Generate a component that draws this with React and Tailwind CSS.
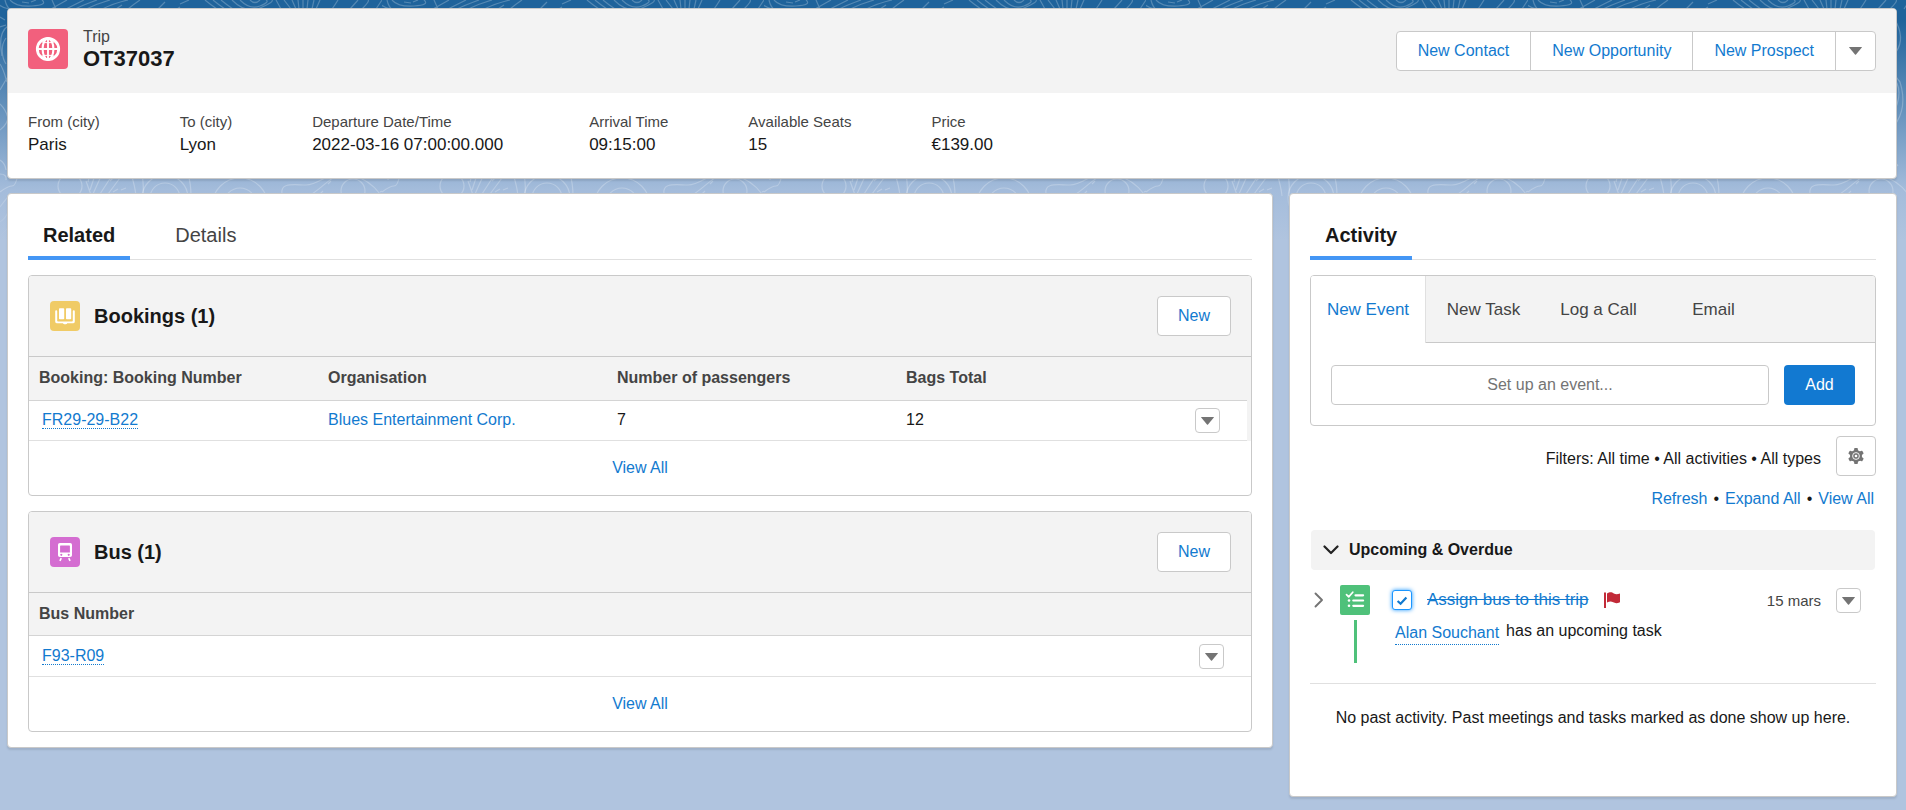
import React from "react";

const card =
  "rounded border border-[#c9c9c9] bg-white shadow-[0_2px_2px_rgba(0,0,0,0.1)]";
const link = "text-[#127acf] hover:underline";
const dotted = "border-b border-dotted border-[#127acf] text-[#127acf]";
const outlineButton =
  "h-10 rounded border border-[#c9c9c9] bg-white text-base text-[#127acf]";

const tripFields = [
  { label: "From (city)", value: "Paris" },
  { label: "To (city)", value: "Lyon" },
  { label: "Departure Date/Time", value: "2022-03-16 07:00:00.000" },
  { label: "Arrival Time", value: "09:15:00" },
  { label: "Available Seats", value: "15" },
  { label: "Price", value: "€139.00" },
];

function Backdrop() {
  return (
    <div
      aria-hidden="true"
      className="absolute inset-x-0 top-0 h-60 bg-[linear-gradient(to_bottom,#1f639b_20px,#a4bcdb_190px,#b0c4df_240px)]"
    >
      <svg
        className="block h-full w-full [mask-image:linear-gradient(to_bottom,#000_190px,transparent_238px)]"
        fill="none"
      >
        <defs>
          <pattern id="topo" width="382" height="240" patternUnits="userSpaceOnUse">
            <g stroke="#fff" strokeOpacity="0.24" strokeWidth="1.2">
              <path d="M-5 0q4 7 14 9M10 0q6 7 22 6t10-6M5 0q3 14 20 16M22 2l7 1M31 2l5-2M52 0l4 9M67 0l-16 9M84 0l-20 10M97 0q-14 5-24 10M110 0q-14 4-26 10M128 0q-14 3-28 10M116 9l6-4M140 0q-6 4-12 9M158 9l7-7M180 4l9-4M177 9l3-2" />
              <path d="M221 0q6 5 12 9M213 0q6 5 12 9M205 0q6 5 12 9M232 0q14 14 28 8t12-8M240 0q10 10 20 6t6-6M250 0q5 5 10 0M276 0l5 9M284 0l7 9M292 0l4 9M298 0l1 9M303 0v9M308 0l-1 9M314 0l-2 9M320 0l-4 9M338 0q-3 5-6 9M350 9l8-9M362 9q8-8 6-9M376 9l6-9" />
              <path d="M0 17l5 3M0 27l6-2M8 26c-9 6-8 20-6 30M6 38c-6 8-4 20 0 26M0 64c4 6 5 12 7 18M0 90l7-12M0 104q6 6 8 14M0 130q8-6 8-14M0 160q5 3 6 10M0 174q7 0 6 6M0 192q8-6 12-6t6-12M0 207l10-13M0 222q6-4 8-10M0 236l8-8" />
              <circle cx="70" cy="186" r="12" />
              <path d="M86 181l5 14M93 194l9-20M100 194l13-20M108 194l15-20M90 174l-2 8M94 178l-4 12M113 192l5-3M121 190l5-2M131 174q4 12 5 22M142 174q2 12 1 22M110 181l4-4" />
              <circle cx="165" cy="198" r="15" />
              <circle cx="165" cy="198" r="23" />
              <path d="M188 174q3 10 3 22" />
              <circle cx="240" cy="206" r="28" />
              <circle cx="240" cy="204" r="16" />
              <path d="M230 176l8-2M282 194c-2-12 12-9 24-9s22-12 34-12M312 194c12-8 20-18 26-18M320 194l3-3M328 184l3-3M350 174q20 6 30 20" />
              <circle cx="353" cy="191" r="12" />
              <path d="M380 192q14-6 22-18" />
              <path d="M356 12q12 14 2 30t6 34q14 14 0 40t6 50M366 18q12 20 2 34t4 30q8 26-6 44M336 200q14 6 6 24M362 204q-8 12 6 28" />
            </g>
          </pattern>
        </defs>
        <rect width="100%" height="100%" fill="url(#topo)" />
      </svg>
    </div>
  );
}

function Caret({ className = "" }) {
  return (
    <svg width="13" height="8" viewBox="0 0 13 8" className={className} aria-hidden="true">
      <path d="M0.4 0h12.2q.5 0 .2.6L7 7.6q-.5.5-1 0L.2.6Q-.1 0 .4 0z" fill="#747474" />
    </svg>
  );
}

function MenuButton({ label }) {
  return (
    <button
      type="button"
      aria-label={label}
      className="flex size-[25px] items-center justify-center rounded border border-[#c9c9c9] bg-white pt-px"
    >
      <Caret />
    </button>
  );
}

function TabBar({ tabs, label }) {
  return (
    <div
      role="tablist"
      aria-label={label}
      className="flex gap-[29px] shadow-[inset_0_-1px_0_#e0e0e0]"
    >
      {tabs.map((tab, i) => (
        <button
          key={tab}
          type="button"
          role="tab"
          aria-selected={i === 0}
          className={
            i === 0
              ? "h-[50px] px-[15px] text-xl font-bold text-[#181818] shadow-[inset_0_-4px_0_#4496f5]"
              : "h-[50px] px-4 text-xl text-[#444444]"
          }
        >
          {tab}
        </button>
      ))}
    </div>
  );
}

function GlobeIcon() {
  return (
    <svg viewBox="0 0 40 40" className="size-10" aria-hidden="true">
      <rect width="40" height="40" rx="4" fill="#f2607d" />
      <g fill="none" stroke="#fff">
        <circle cx="20" cy="20" r="10.7" strokeWidth="2.8" />
        <ellipse cx="20" cy="20" rx="5.4" ry="10.6" strokeWidth="2.1" />
        <path d="M20 9v22M9 20h22" strokeWidth="1.9" />
        <path d="M12.5 12.6q7.500 2.400 15 0M12.500 27.400q7.500-2.400 15 0" strokeWidth="1.1" />
      </g>
    </svg>
  );
}

function BookIcon() {
  return (
    <svg viewBox="0 0 30 30" className="size-[30px]" aria-hidden="true">
      <rect width="30" height="30" rx="4" fill="#f0cb66" />
      <rect x="9" y="7.300" width="5.200" height="11" rx="0.800" fill="#fff" />
      <rect x="16" y="7.300" width="5.200" height="11" rx="0.800" fill="#fff" />
      <path
        d="M5.200 10.200q0-1 1-1t1 1v9.500q0 .8.800.8h14q.8 0 .8-.8v-9.500q0-1 1-1t1 1v10.600q0 1.400-1.400 1.400h-6.200q-.2 1.100-1.500 1.100h-1.200q-1.300 0-1.500-1.100H6.600q-1.400 0-1.400-1.400z"
        fill="#fff"
      />
    </svg>
  );
}

function BusIcon() {
  return (
    <svg viewBox="0 0 30 30" className="size-[30px]" aria-hidden="true">
      <rect width="30" height="30" rx="4" fill="#d46dd1" />
      <path
        fillRule="evenodd"
        fill="#fff"
        d="M9.900 6h10.200q1.900 0 1.900 1.800v10.400q0 1.800-1.900 1.800H9.900Q8 20 8 18.200V7.800Q8 6 9.900 6zM10.600 8.600q-.5 0-.5.500v6q0 .5.500.5h8.800q.5 0 .5-.5v-6q0-.5-.5-.5zM11.300 16.700a1 1 0 1 0 .01 0zM18.700 16.700a1 1 0 1 0 .01 0z"
      />
      <path d="M11 21.600l-.8 1.700M19 21.600l.8 1.700" stroke="#fff" strokeWidth="1.600" strokeLinecap="round" />
    </svg>
  );
}

function TaskIcon() {
  return (
    <svg viewBox="0 0 30 30" className="size-[30px]" aria-hidden="true">
      <rect width="30" height="30" rx="2" fill="#4fc17a" />
      <g fill="none" stroke="#fff" strokeLinecap="round" strokeLinejoin="round">
        <path d="M6.500 9.700l2.200 2.200L12.800 7.200" strokeWidth="1.700" />
        <path d="M15.500 10.300h7.600M13.300 15.500h9.800M13.300 20.800h9.800" strokeWidth="2.200" />
      </g>
      <circle cx="9" cy="15.500" r="1.300" fill="#fff" />
      <circle cx="9" cy="20.800" r="1.300" fill="#fff" />
    </svg>
  );
}

function GearIcon() {
  return (
    <svg viewBox="0 0 20 20" className="size-5" aria-hidden="true">
      <g fill="#747474">
        <circle cx="10" cy="10" r="6" />
        {[0, 60, 120, 180, 240, 300].map((a) => (
          <path key={a} d="M7.800 5.500L8.300 2.500Q8.400 2 8.900 2H11.100Q11.600 2 11.700 2.500L12.200 5.500z" transform={`rotate(${a} 10 10)`} />
        ))}
      </g>
      <circle cx="10" cy="10" r="3.400" fill="none" stroke="#fff" strokeWidth="0.900" />
      <circle cx="10" cy="10" r="1.300" fill="#fff" />
    </svg>
  );
}

function RelatedList({ icon, title, footer, children }) {
  return (
    <section className="overflow-hidden rounded border border-[#c9c9c9]">
      <header className="flex h-[81px] items-center border-b border-[#c9c9c9] bg-[#f3f3f3] pr-5 pl-[21px]">
        {icon}
        <h2 className="ml-[14px] flex-1 text-xl font-bold">{title}</h2>
        <button type="button" className={`${outlineButton} px-5`}>
          New
        </button>
      </header>
      {children}
      <div className="flex h-[54px] items-center justify-center">
        <a href="#" className={link}>
          {footer}
        </a>
      </div>
    </section>
  );
}

const headCell = "h-[43px] px-[10px] text-left font-bold";
const cell = "h-10 px-[10px]";

function TripHeader() {
  return (
    <header className={`${card} overflow-hidden`}>
      <div className="flex items-end justify-between bg-[#f3f3f3] px-5 pt-[18px] pb-[22px]">
        <div className="flex items-center gap-[15px]">
          <GlobeIcon />
          <div>
            <p className="text-base leading-5 text-[#444444]">Trip</p>
            <h1 className="text-[22px] leading-6 font-bold">OT37037</h1>
          </div>
        </div>
        <div className="flex h-10 divide-x divide-[#c9c9c9] rounded border border-[#c9c9c9] bg-white text-base text-[#127acf]">
          <button type="button" className="px-[21px]">New Contact</button>
          <button type="button" className="px-[21px]">New Opportunity</button>
          <button type="button" className="px-[21px]">New Prospect</button>
          <button type="button" aria-label="More actions" className="flex w-[39px] items-center justify-center">
            <Caret />
          </button>
        </div>
      </div>
      <dl className="flex flex-wrap gap-x-20 px-5 pt-[18px] pb-[21px]">
        {tripFields.map((f) => (
          <div key={f.label} className={f.label.startsWith("Departure") ? "min-w-[197px]" : ""}>
            <dt className="text-[15px] leading-[22px] text-[#444444]">{f.label}</dt>
            <dd className="text-[17px] leading-6">{f.value}</dd>
          </div>
        ))}
      </dl>
    </header>
  );
}

function RelatedPanel() {
  return (
    <main className={`${card} px-5 pt-4 pb-[15px]`}>
      <TabBar tabs={["Related", "Details"]} label="Record" />
      <div className="mt-[15px] flex flex-col gap-[15px]">
        <RelatedList icon={<BookIcon />} title="Bookings (1)" footer="View All">
          <div className="bg-[#f3f3f3] pr-1">
            <table className="w-full table-fixed border-collapse">
              <colgroup>
                <col />
                <col />
                <col />
                <col />
                <col className="w-[62px]" />
              </colgroup>
              <thead className="border-b border-[#d4d4d4] bg-[#f3f3f3] text-[#444444]">
                <tr>
                  <th className={headCell}>Booking: Booking Number</th>
                  <th className={headCell}>Organisation</th>
                  <th className={headCell}>Number of passengers</th>
                  <th className={headCell}>Bags Total</th>
                  <th className={headCell} aria-label="Actions" />
                </tr>
              </thead>
              <tbody>
                <tr className="border-b border-[#e0e0e0] bg-white">
                  <td className="h-10 px-[13px]">
                    <a href="#" className={dotted}>FR29-29-B22</a>
                  </td>
                  <td className={cell}>
                    <a href="#" className={link}>Blues Entertainment Corp.</a>
                  </td>
                  <td className={cell}>7</td>
                  <td className={cell}>12</td>
                  <td className={cell}>
                    <MenuButton label="Booking actions" />
                  </td>
                </tr>
              </tbody>
            </table>
          </div>
        </RelatedList>

        <RelatedList icon={<BusIcon />} title="Bus (1)" footer="View All">
          <table className="w-full table-fixed border-collapse">
            <colgroup>
              <col />
              <col className="w-[62px]" />
            </colgroup>
            <thead className="border-b border-[#d4d4d4] bg-[#f3f3f3] text-[#444444]">
              <tr>
                <th className={headCell}>Bus Number</th>
                <th className={headCell} aria-label="Actions" />
              </tr>
            </thead>
            <tbody>
              <tr className="border-b border-[#e0e0e0] bg-white">
                <td className="h-[41px] px-[13px]">
                  <a href="#" className={dotted}>F93-R09</a>
                </td>
                <td className={cell}>
                  <MenuButton label="Bus actions" />
                </td>
              </tr>
            </tbody>
          </table>
        </RelatedList>
      </div>
    </main>
  );
}

function Composer() {
  return (
    <section className="mt-[15px] overflow-hidden rounded border border-[#c9c9c9]">
      <div role="tablist" aria-label="Activity type" className="flex h-[67px] bg-[#f3f3f3] text-[17px] text-[#444444] shadow-[inset_0_-1px_0_#c9c9c9]">
        <button type="button" role="tab" aria-selected="true" className="w-[115px] border-r border-[#e0e0e0] bg-white text-[#127acf]">
          New Event
        </button>
        <button type="button" role="tab" aria-selected="false" className="w-[115px]">New Task</button>
        <button type="button" role="tab" aria-selected="false" className="w-[115px]">Log a Call</button>
        <button type="button" role="tab" aria-selected="false" className="w-[115px]">Email</button>
      </div>
      <div className="flex gap-[15px] px-5 pt-[22px] pb-5">
        <input
          type="text"
          aria-label="Set up an event"
          placeholder="Set up an event..."
          className="h-10 min-w-0 flex-1 rounded border border-[#c9c9c9] bg-white text-center placeholder:text-[#747474]"
        />
        <button type="button" className="h-10 w-[71px] rounded bg-[#1279d1] text-white">
          Add
        </button>
      </div>
    </section>
  );
}

function ActivityPanel() {
  return (
    <aside className={`${card} px-5 pt-4 pb-[66px]`}>
      <TabBar tabs={["Activity"]} label="Activity" />
      <Composer />

      <div className="mt-[10px] flex items-center justify-end gap-[15px]">
        <p className="pt-[6px]">Filters: All time • All activities • All types</p>
        <button type="button" aria-label="Filter settings" className="flex size-10 items-center justify-center rounded border border-[#c9c9c9] bg-white">
          <GearIcon />
        </button>
      </div>
      <div className="mt-[11px] flex justify-end gap-[6px] pr-[2px] leading-6">
        <a href="#" className={link}>Refresh</a>
        <span>•</span>
        <a href="#" className={link}>Expand All</a>
        <span>•</span>
        <a href="#" className={link}>View All</a>
      </div>

      <div className="mt-[19px] px-px">
        <button type="button" className="flex h-10 w-full items-center gap-[10px] rounded bg-[#f3f3f3] pl-3 text-left font-bold">
          <svg width="16" height="10" viewBox="0 0 16 10" fill="none" aria-hidden="true">
            <path d="M1.500 1.500L8 8l6.500-6.500" stroke="#222" strokeWidth="2.200" strokeLinecap="round" strokeLinejoin="round" />
          </svg>
          Upcoming &amp; Overdue
        </button>
      </div>

      <div className="mt-[15px] flex h-[79px] items-start pr-[15px]">
        <button type="button" aria-label="Expand task" className="flex h-[30px] w-[30px] items-center pl-1">
          <svg width="10" height="16" viewBox="0 0 10 16" fill="none" aria-hidden="true">
            <path d="M1.500 1.500L8 8l-6.500 6.500" stroke="#747474" strokeWidth="1.900" strokeLinecap="round" strokeLinejoin="round" />
          </svg>
        </button>
        <div className="flex flex-col items-center gap-[5px]">
          <TaskIcon />
          <div className="h-[43px] w-[3px] bg-[#4fc17a]" />
        </div>
        <div className="ml-[22px] flex-1">
          <div className="flex h-[30px] items-center">
            <span className="relative flex size-5">
              <input
                type="checkbox"
                aria-label="Mark task as done"
                defaultChecked
                className="size-5 appearance-none rounded-[3px] border border-[#1b96ff] bg-white shadow-[0_0_4px_#1b96ff]"
              />
              <svg viewBox="0 0 20 20" className="pointer-events-none absolute inset-0" fill="none" aria-hidden="true">
                <path d="M5.600 11l3 2.800L14.400 7.500" stroke="#127acf" strokeWidth="2.200" />
              </svg>
            </span>
            <a href="#" className="ml-[15px] text-[17px] text-[#127acf] line-through">
              Assign bus to this trip
            </a>
            <svg width="17" height="16" viewBox="0 0 17 16" className="ml-[15px]" aria-hidden="true">
              <path d="M0 .6h2V16H0zM3 1.500C6-.4 8 .3 9.800 1.500c1.800 1 3.400 1 6.200.1v8.700c-3 1.200-5 1-6.800 0-1.800-1-3.400-1.100-6.200.2z" fill="#c22a38" />
            </svg>
            <time className="ml-auto pt-[2px] text-[15px] text-[#444444]">15 mars</time>
            <div className="ml-[15px]">
              <MenuButton label="Task actions" />
            </div>
          </div>
          <p className="mt-[5px] flex items-start gap-[7px] pl-[3px] leading-[22px]">
            <a href="#" className={`${dotted} pt-[2px]`}>Alan Souchant</a>
            has an upcoming task
          </p>
        </div>
      </div>

      <p className="mt-[19px] border-t border-[#e0e0e0] pt-[22px] text-center leading-6">
        No past activity. Past meetings and tasks marked as done show up here.
      </p>
    </aside>
  );
}

export default function App() {
  return (
    <div className="relative min-h-screen bg-[#b0c4df] font-['Liberation_Sans',Arial,sans-serif] text-base text-[#181818]">
      <Backdrop />
      <div className="relative flex flex-col gap-[14px] pt-2 pr-[9px] pb-[13px] pl-[7px]">
        <TripHeader />
        <div className="grid grid-cols-[633fr_304fr] items-start gap-4">
          <RelatedPanel />
          <ActivityPanel />
        </div>
      </div>
    </div>
  );
}
